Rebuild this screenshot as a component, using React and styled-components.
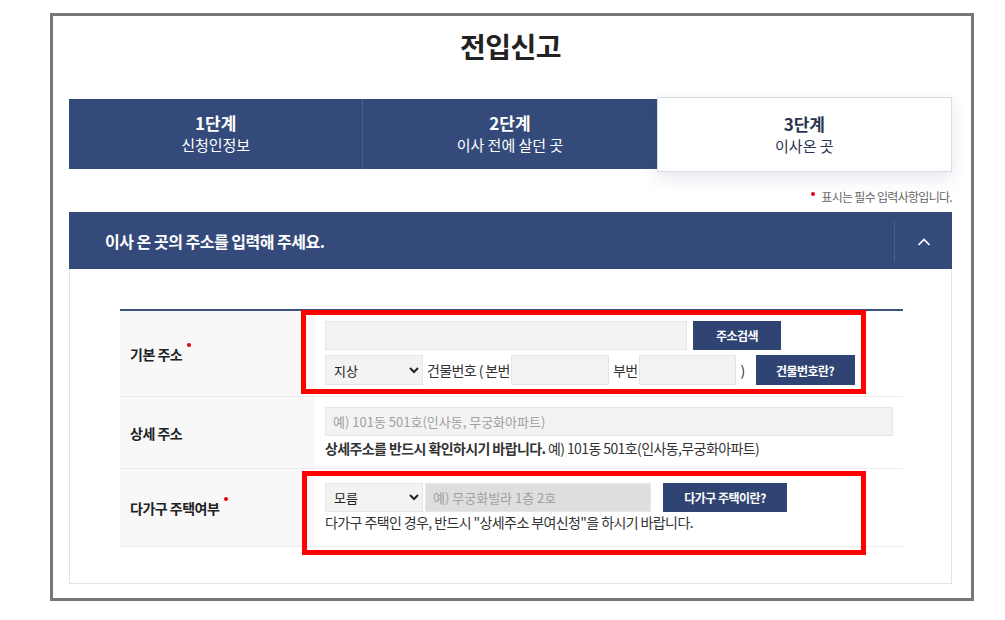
import React from 'react';
import styled, { createGlobalStyle } from 'styled-components';

const GlobalStyle = createGlobalStyle`
  body {
    margin: 0;
    background: #fff;
    font-family: "Noto Sans CJK KR", "Noto Sans", sans-serif;
    color: #222;
  }
`;

const theme = {
  navy: '#344a7a',
  button: '#2f4472',
  red: '#ff0000',
};

const Frame = styled.div`
  box-sizing: border-box;
  width: 924px;
  height: 588px;
  margin: 13px 0 0 50px;
  border: 3px solid #777;
  padding: 10px 19px 0 16px;
`;

const Title = styled.h1`
  margin: 0;
  font-size: 28px;
  line-height: 40px;
  font-weight: 700;
  text-align: center;
  color: #222;
  letter-spacing: -0.5px;
`;

const Steps = styled.ol`
  display: flex;
  margin: 33px 0 0;
  padding: 0;
  height: 70px;
  list-style: none;
`;

const Step = styled.li`
  box-sizing: border-box;
  flex: 1;
  display: flex;
  flex-direction: column;
  align-items: center;
  justify-content: center;
  background: ${({ $active }) => ($active ? '#fff' : theme.navy)};
  color: ${({ $active }) => ($active ? '#2b3450' : '#fff')};
  border-left: ${({ $first }) => ($first ? 'none' : '1px solid #4a5f8c')};
  ${({ $active }) =>
    $active &&
    `
    margin: -2px 0 -3px;
    border: 1px solid #d9dde6;
    box-shadow: 0 6px 16px rgba(40, 60, 110, 0.12);
  `}
`;

const StepNum = styled.strong`
  font-size: 17px;
  line-height: 22px;
  font-weight: 700;
`;

const StepName = styled.span`
  font-size: 15px;
  line-height: 22px;
`;

const Note = styled.p`
  margin: 18px 0 0;
  font-size: 12px;
  line-height: 20px;
  color: #666;
  text-align: right;
  letter-spacing: -0.7px;
`;

const Dot = styled.span`
  position: relative;
  top: ${({ $top }) => $top || -6}px;
  display: inline-block;
  width: 4px;
  height: 4px;
  border-radius: 50%;
  background: #e60012;
  margin: ${({ $margin }) => $margin || '0 6px 0 0'};
`;

const SectionHeader = styled.div`
  display: flex;
  align-items: stretch;
  margin-top: 5px;
  height: 57px;
  background: ${theme.navy};
  color: #fff;
`;

const SectionTitle = styled.h2`
  flex: 1;
  display: flex;
  align-items: center;
  margin: 0;
  padding-left: 36px;
  font-size: 16px;
  font-weight: 700;
  letter-spacing: -0.5px;
`;

const Toggle = styled.button`
  width: 58px;
  margin: 10px 0 7px;
  padding: 0;
  border: none;
  border-left: 1px solid #4b5f8a;
  background: transparent;
  color: #fff;
  display: flex;
  align-items: center;
  justify-content: center;
`;

const Panel = styled.div`
  box-sizing: border-box;
  height: 315px;
  border: 1px solid #e3e3e3;
  border-top: none;
  padding: 40px 48px 0 50px;
`;

const Table = styled.div`
  border-top: 2px solid #3d5180;
`;

const Row = styled.div`
  display: flex;
  border-bottom: 1px solid #ececec;
  min-height: ${({ $h }) => $h}px;
`;

const Label = styled.div`
  box-sizing: border-box;
  width: 195px;
  flex: none;
  display: flex;
  align-items: center;
  padding-left: 10px;
  background: #f8f8f8;
  font-size: 14px;
  font-weight: 700;
  color: #222;
  letter-spacing: -0.5px;
`;

const Cell = styled.div`
  position: relative;
  flex: 1;
  display: flex;
  flex-direction: column;
  gap: ${({ $gap }) => $gap || 0}px;
  padding: ${({ $pad }) => $pad};
`;

const Line = styled.div`
  display: flex;
  align-items: center;
  font-size: 14px;
  color: #333;
  letter-spacing: -0.6px;
`;

const Input = styled.input`
  box-sizing: border-box;
  width: ${({ $w }) => $w}px;
  height: ${({ $h }) => $h || 29}px;
  border: 1px solid #e6e6e6;
  background: ${({ disabled }) => (disabled ? '#dedede' : '#f3f3f3')};
  padding: 0 7px;
  font-family: "Noto Sans CJK KR", sans-serif;
  font-size: 13px;
  color: #333;
  margin: ${({ $margin }) => $margin || 0};
  &::placeholder {
    color: #a0a0a0;
  }
`;

const Select = styled.select`
  box-sizing: border-box;
  width: 98px;
  height: ${({ $h }) => $h || 29}px;
  border: 1px solid #e6e6e6;
  background: #f3f3f3;
  padding: 0 4px;
  font-family: "Noto Sans CJK KR", sans-serif;
  font-size: 13px;
  color: #222;
`;

const Button = styled.button`
  box-sizing: border-box;
  width: ${({ $w }) => $w}px;
  height: ${({ $h }) => $h || 29}px;
  margin-left: ${({ $ml }) => $ml || 0}px;
  border: none;
  background: ${theme.button};
  color: #fff;
  font-family: "Noto Sans CJK KR", sans-serif;
  font-size: 12px;
  font-weight: 700;
  letter-spacing: -0.5px;
`;

const Text = styled.span`
  margin: ${({ $margin }) => $margin || 0};
`;

const Help = styled.p`
  margin: 0;
  font-size: 14px;
  line-height: 20px;
  color: #333;
  letter-spacing: -0.6px;
`;

const Highlight = styled.div`
  position: absolute;
  pointer-events: none;
  border: 5px solid ${theme.red};
  top: ${({ $top }) => $top}px;
  left: ${({ $left }) => $left}px;
  width: ${({ $w }) => $w}px;
  height: ${({ $h }) => $h}px;
  box-sizing: border-box;
`;

const steps = [
  { num: '1단계', name: '신청인정보' },
  { num: '2단계', name: '이사 전에 살던 곳' },
  { num: '3단계', name: '이사온 곳', active: true },
];

const ChevronUp = () => (
  <svg width="16" height="10" viewBox="0 0 16 10" fill="none">
    <path d="M2.5 8L8 2.5L13.5 8" stroke="#fff" strokeWidth="1.7" />
  </svg>
);

const App = () => (
  <>
    <GlobalStyle />
    <Frame>
      <Title>전입신고</Title>
      <Steps>
        {steps.map(({ num, name, active }, i) => (
          <Step key={num} $active={active} $first={i === 0}>
            <StepNum>{num}</StepNum>
            <StepName>{name}</StepName>
          </Step>
        ))}
      </Steps>
      <Note>
        <Dot $margin="0 6px 0 0" />
        표시는 필수 입력사항입니다.
      </Note>
      <SectionHeader>
        <SectionTitle>이사 온 곳의 주소를 입력해 주세요.</SectionTitle>
        <Toggle aria-label="접기">
          <ChevronUp />
        </Toggle>
      </SectionHeader>
      <Panel>
        <Table>
          <Row $h={85}>
            <Label>
              기본 주소
              <Dot $top={-9} $margin="0 0 0 5px" />
            </Label>
            <Cell $pad="10px 10px 10px" $gap={5}>
              <Line>
                <Input $w={362} />
                <Button $w={88} $ml={6}>주소검색</Button>
              </Line>
              <Line>
                <Select $h={30}>
                  <option>지상</option>
                </Select>
                <Text $margin="0 1px 0 4px">건물번호 ( 본번</Text>
                <Input $w={98} $h={30} />
                <Text $margin="0 2px 0 4px">부번</Text>
                <Input $w={97} $h={30} />
                <Text $margin="0 0 0 4px">)</Text>
                <Button $w={99} $h={30} $ml={11}>건물번호란?</Button>
              </Line>
              <Highlight $top={-1} $left={-14} $w={565} $h={84} />
            </Cell>
          </Row>
          <Row $h={70}>
            <Label>상세 주소</Label>
            <Cell $pad="10px 10px 10px" $gap={2}>
              <Input $w={568} placeholder="예) 101동 501호(인사동, 무궁화아파트)" />
              <Help>
                <strong>상세주소를 반드시 확인하시기 바랍니다.</strong> 예) 101동 501호(인사동,무궁화아파트)
              </Help>
            </Cell>
          </Row>
          <Row $h={77}>
            <Label>
              다가구 주택여부
              <Dot $top={-9} $margin="0 0 0 5px" />
            </Label>
            <Cell $pad="14px 10px 13px" $gap={0}>
              <Line>
                <Select>
                  <option>모름</option>
                </Select>
                <Input $w={226} $margin="0 0 0 2px" disabled placeholder="예) 무궁화빌라 1층 2호" />
                <Button $w={124} $ml={12}>다가구 주택이란?</Button>
              </Line>
              <Help>다가구 주택인 경우, 반드시 "상세주소 부여신청"을 하시기 바랍니다.</Help>
              <Highlight $top={2} $left={-13} $w={564} $h={84} />
            </Cell>
          </Row>
        </Table>
      </Panel>
    </Frame>
  </>
);

export default App;
